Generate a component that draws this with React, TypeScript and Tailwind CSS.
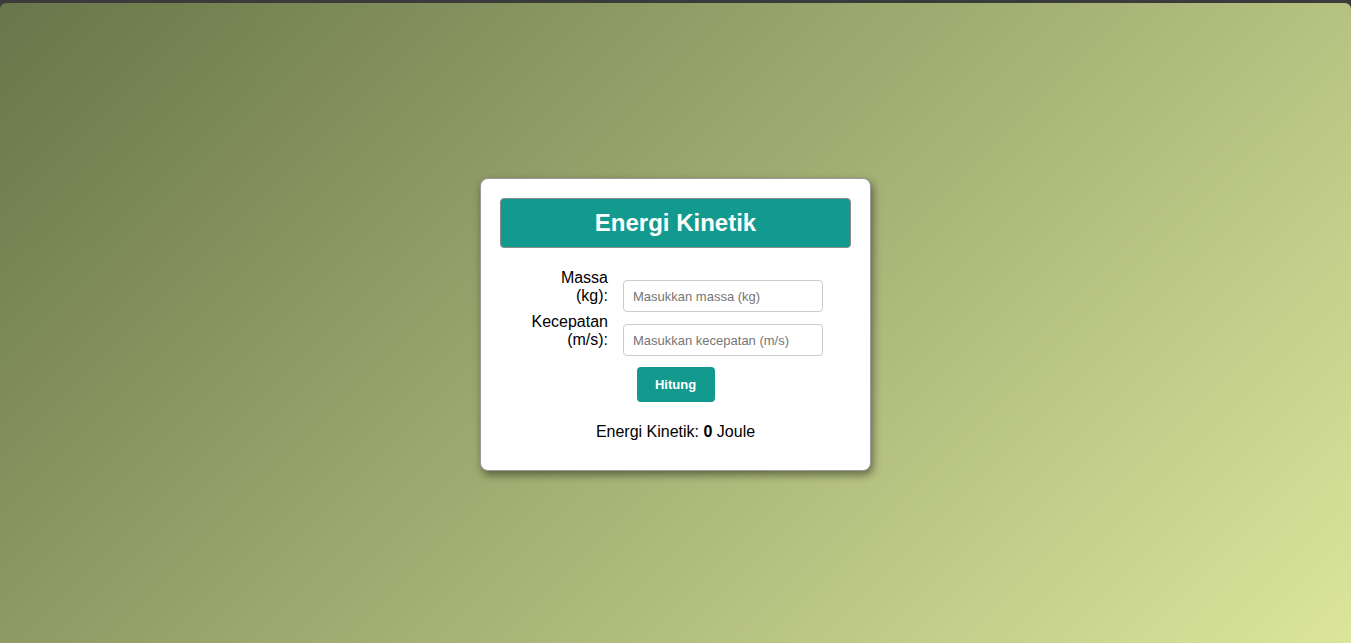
import React, { useState } from 'react';

const App: React.FC = () => {
  const [massa, setMassa] = useState('');
  const [kecepatan, setKecepatan] = useState('');
  const [hasil, setHasil] = useState(0);

  const hitung = () => {
    const m = parseFloat(massa) || 0;
    const v = parseFloat(kecepatan) || 0;
    setHasil(0.5 * m * v * v);
  };

  return (
    <div className="h-[643px] w-full bg-[#3b3b3b] pt-[3px] font-['Liberation_Sans',Arial,sans-serif] text-black">
      <div className="flex h-[640px] items-center justify-center rounded-t-[6px] bg-[linear-gradient(135deg,#68764a,#dbe69b)] pt-[3px]">
        <div className="w-[391px] rounded-[8px] border border-[#9a9a9a] bg-white px-[19px] pt-[19px] pb-[19px] shadow-[2px_4px_8px_rgba(0,0,0,0.45)]">
          <div className="flex h-[50px] items-center justify-center rounded-[4px] border border-[#8a8a8a] bg-[#139a8f]">
            <h1 className="text-[24px] font-bold text-white">Energi Kinetik</h1>
          </div>

          <div className="mt-[20px] flex flex-col items-center">
            <div className="flex h-[44px] items-end gap-[15px]">
              <label className="w-[80px] pb-[7px] text-right text-[16px] leading-[18px]">Massa (kg):</label>
              <input
                type="number"
                value={massa}
                onChange={(e) => setMassa(e.target.value)}
                placeholder="Masukkan massa (kg)"
                className="h-[32px] w-[200px] rounded-[4px] border border-[#cccccc] px-[9px] text-[13px] placeholder:text-[#757575] outline-none"
              />
            </div>
            <div className="flex h-[44px] items-end gap-[15px]">
              <label className="w-[80px] pb-[7px] text-right text-[16px] leading-[18px]">Kecepatan (m/s):</label>
              <input
                type="number"
                value={kecepatan}
                onChange={(e) => setKecepatan(e.target.value)}
                placeholder="Masukkan kecepatan (m/s)"
                className="h-[32px] w-[200px] rounded-[4px] border border-[#cccccc] px-[9px] text-[13px] placeholder:text-[#757575] outline-none"
              />
            </div>
            <button
              onClick={hitung}
              className="mt-[11px] h-[35px] w-[78px] rounded-[4px] bg-[#139a8f] text-[13px] font-bold text-white"
            >
              Hitung
            </button>
          </div>

          <p className="mt-[21px] mb-[10px] text-center text-[16px] leading-[18px]">
            Energi Kinetik: <span className="font-bold">{hasil}</span> Joule
          </p>
        </div>
      </div>
    </div>
  );
};

export default App;
